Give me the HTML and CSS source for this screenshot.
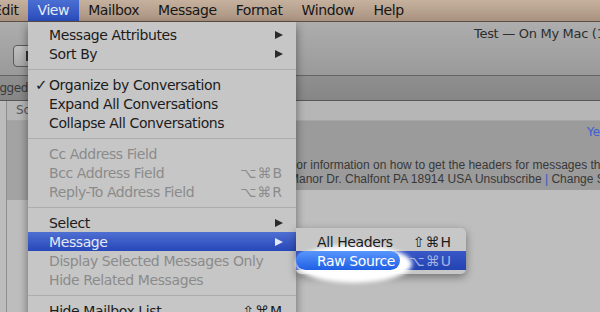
FILE: index.html
```html
<!DOCTYPE html>
<html lang="en">
<head>
    <meta charset="UTF-8">
    <title>Mail - View Menu</title>
    <link rel="stylesheet" href="styles.css">
</head>
<body>

<!-- Menu Bar -->
<div class="menubar">
    <span class="mb-item first">Edit</span>
    <span class="mb-item open">View</span>
    <span class="mb-item">Mailbox</span>
    <span class="mb-item">Message</span>
    <span class="mb-item">Format</span>
    <span class="mb-item">Window</span>
    <span class="mb-item">Help</span>
</div>

<!-- Mail window behind the menu -->
<div class="window">
    <div class="toolbar">
        <div class="title">Test — On My Mac (1 message)</div>
        <div class="tb-button"><span class="tb-glyph"></span></div>
    </div>
    <div class="favbar"><span class="fav">Flagged</span></div>
    <div class="panes">
        <div class="sidebar"></div>
        <div class="list">
            <div class="col-header">Scope</div>
            <div class="list-selected"></div>
        </div>
        <div class="viewer">
            <div class="col-header"></div>
            <div class="msg-head">
                <div class="date">Yesterday</div>
                <p>For information on how to get the headers for messages through other mail clients</p>
                <p>Manor Dr. Chalfont PA 18914 USA Unsubscribe <span class="bar">|</span> Change Subscription</p>
            </div>
        </div>
    </div>
</div>

<!-- View menu -->
<div class="menu">
    <div class="mi">Message Attributes<span class="arrow"></span></div>
    <div class="mi">Sort By<span class="arrow"></span></div>
    <div class="sep"></div>
    <div class="mi"><span class="check">✓</span>Organize by Conversation</div>
    <div class="mi">Expand All Conversations</div>
    <div class="mi">Collapse All Conversations</div>
    <div class="sep"></div>
    <div class="mi disabled">Cc Address Field</div>
    <div class="mi disabled">Bcc Address Field<span class="key">⌥⌘B</span></div>
    <div class="mi disabled">Reply-To Address Field<span class="key">⌥⌘R</span></div>
    <div class="sep"></div>
    <div class="mi">Select<span class="arrow"></span></div>
    <div class="mi selected">Message<span class="arrow"></span></div>
    <div class="mi disabled">Display Selected Messages Only</div>
    <div class="mi disabled">Hide Related Messages</div>
    <div class="sep"></div>
    <div class="mi">Hide Mailbox List<span class="key">⇧⌘M</span></div>
</div>

<!-- Message submenu -->
<div class="submenu">
    <div class="glow"></div>
    <div class="mi"><span class="label">All Headers</span><span class="key">⇧⌘H</span></div>
    <div class="mi chosen"><span class="pill"></span><span class="label">Raw Source</span><span class="key">⌥⌘U</span></div>
</div>

</body>
</html>
```

FILE: styles.css
```css
body {
    margin: 0;
    height: 312px;
    overflow: hidden;
    position: relative;
    background: #bfbfbf;
    font-family: "DejaVu Sans", "Noto Sans", sans-serif;
    color: #1c1c1c;
}

/* Menu bar */
.menubar {
    display: flex;
    height: 21px;
    background: linear-gradient(#c6b19f, #a99380);
    border-bottom: 1px solid #5f4f43;
    font-size: 14px;
    letter-spacing: -0.4px;
    white-space: nowrap;
    color: #161616;
}

.mb-item {
    padding: 0 9.5px;
    line-height: 21px;
}

.mb-item.first {
    margin-left: -16.5px;
}

.mb-item.open {
    background: linear-gradient(#4a6fd3, #2a4cbc);
    color: #e6ebf8;
}

/* Window */
.toolbar {
    height: 53px;
    background: linear-gradient(#adadad, #9a9a9a);
    border-bottom: 1px solid #646464;
}

.title {
    height: 20px;
    padding: 3px 0 0 474px;
    font-size: 13px;
    line-height: 17px;
    letter-spacing: -0.3px;
    color: #2e2e2e;
    white-space: nowrap;
    overflow: hidden;
}

.tb-button {
    display: flex;
    align-items: center;
    width: 60px;
    height: 20px;
    margin-left: 13px;
    border: 1px solid #5a5a5a;
    border-radius: 4px;
    background: linear-gradient(#c0c0c0, #a8a8a8);
}

.tb-glyph {
    width: 3px;
    height: 10px;
    margin-left: 12px;
    background: #333;
}

.favbar {
    height: 24px;
    background: linear-gradient(#8f8f8f, #868686);
    border-bottom: 1px solid #585858;
    font-size: 12px;
    line-height: 24px;
    letter-spacing: -0.4px;
    color: #3a3a3a;
    white-space: nowrap;
}

.fav {
    margin-left: -17px;
}

.panes {
    display: grid;
    grid-template-columns: 7px 200px 1fr;
    height: 211px;
}

.sidebar {
    background: #bcbcbc;
    border-right: 1px solid #8e8e8e;
}

.col-header {
    height: 19px;
    padding-left: 9px;
    background: #b6b6b6;
    border-bottom: 1px solid #a6a6a6;
    font-size: 12px;
    line-height: 19px;
    color: #575757;
}

.list {
    background: #bdbdbd;
}

.list-selected {
    height: 79px;
    background: #a3a3a3;
}

.viewer {
    background: #bebebe;
    overflow: hidden;
}

.msg-head {
    height: 65px;
    padding-top: 4px;
    background: #9b9b9b;
    white-space: nowrap;
    overflow: hidden;
}

.date {
    padding-left: 380px;
    font-size: 12px;
    line-height: 14px;
    color: #3b5fd4;
}

.msg-head p {
    margin: 0;
    padding-left: 82px;
    font-family: "Liberation Sans", Arial, sans-serif;
    font-size: 12px;
    line-height: 14px;
    color: #383838;
}

.msg-head p:first-of-type {
    margin-top: 19px;
}

.bar {
    color: #3558c8;
}

/* Menus */
.menu {
    position: absolute;
    left: 28px;
    top: 22px;
    width: 268px;
    padding-top: 3px;
    background: #c6c6c6;
    border-radius: 0 0 5px 5px;
    box-shadow: 0 4px 10px rgba(0, 0, 0, 0.45);
    font-size: 14px;
    letter-spacing: -0.4px;
    z-index: 10;
}

.mi {
    position: relative;
    display: flex;
    align-items: center;
    height: 19px;
    padding: 0 13px 0 21px;
    white-space: nowrap;
}

.check {
    position: absolute;
    left: 7px;
    font-size: 15px;
}

.key,
.arrow {
    margin-left: auto;
}

.key {
    letter-spacing: 1px;
}

.arrow {
    width: 0;
    height: 0;
    border-left: 8px solid #2a2a2a;
    border-top: 4.5px solid transparent;
    border-bottom: 4.5px solid transparent;
}

.disabled {
    color: #8b8b8b;
}

.selected {
    background: linear-gradient(#4e6fd2, #2847b9);
    color: #e3e8f6;
}

.selected .arrow {
    border-left-color: #e3e8f6;
}

.sep {
    height: 12px;
    background: linear-gradient(transparent 6px, #adadad 6px, #adadad 7px, transparent 7px);
}

.submenu {
    position: absolute;
    left: 296px;
    top: 228px;
    width: 170px;
    padding: 4px 0;
    background: #c7c7c7;
    border-radius: 0 5px 5px 5px;
    box-shadow: 0 3px 8px rgba(0, 0, 0, 0.4);
    font-size: 14px;
    letter-spacing: -0.4px;
    z-index: 11;
}

.submenu .mi {
    padding: 0 14px 0 21px;
}

.submenu .label,
.submenu .key {
    position: relative;
    z-index: 3;
}

.chosen {
    background: linear-gradient(#3957c6, #2343b3);
    color: #fff;
}

.chosen .key {
    color: #a4b4e4;
}

.glow {
    position: absolute;
    left: 0;
    top: 17px;
    width: 116px;
    height: 38px;
    border-radius: 50%;
    background: #fff;
    filter: blur(2px);
    z-index: 1;
}

.pill {
    position: absolute;
    left: 0;
    top: 0;
    width: 104px;
    height: 19px;
    border-radius: 10px;
    background: linear-gradient(#5896fb, #1f5fe5);
    z-index: 2;
}
```
